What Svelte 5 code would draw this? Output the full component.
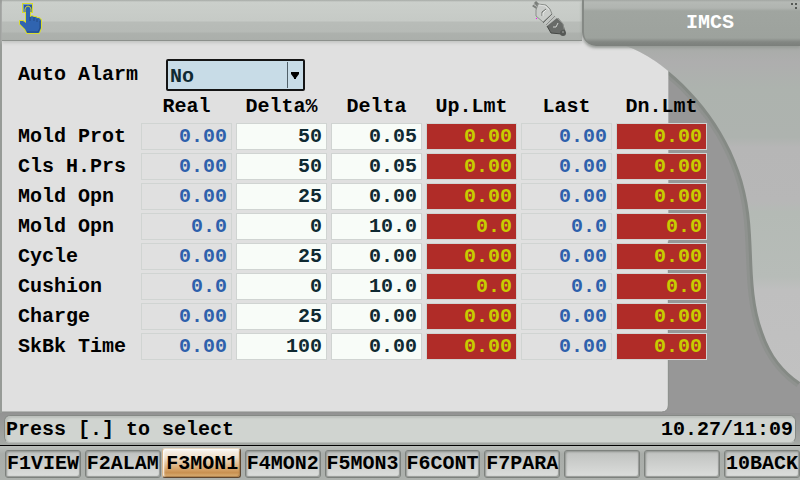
<script lang="ts">
  interface Row {
    name: string;
    values: string[];
  }

  const columns = [
    { title: 'Real', kind: 'actual' },
    { title: 'Delta%', kind: 'entry' },
    { title: 'Delta', kind: 'entry' },
    { title: 'Up.Lmt', kind: 'limit' },
    { title: 'Last', kind: 'actual' },
    { title: 'Dn.Lmt', kind: 'limit' },
  ];

  let rows: Row[] = $state([
    { name: 'Mold Prot', values: ['0.00', '50', '0.05', '0.00', '0.00', '0.00'] },
    { name: 'Cls H.Prs', values: ['0.00', '50', '0.05', '0.00', '0.00', '0.00'] },
    { name: 'Mold Opn', values: ['0.00', '25', '0.00', '0.00', '0.00', '0.00'] },
    { name: 'Mold Opn', values: ['0.0', '0', '10.0', '0.0', '0.0', '0.0'] },
    { name: 'Cycle', values: ['0.00', '25', '0.00', '0.00', '0.00', '0.00'] },
    { name: 'Cushion', values: ['0.0', '0', '10.0', '0.0', '0.0', '0.0'] },
    { name: 'Charge', values: ['0.00', '25', '0.00', '0.00', '0.00', '0.00'] },
    { name: 'SkBk Time', values: ['0.00', '100', '0.00', '0.00', '0.00', '0.00'] },
  ]);

  const keys = ['F1VIEW', 'F2ALAM', 'F3MON1', 'F4MON2', 'F5MON3', 'F6CONT', 'F7PARA', '', '', '10BACK'];

  let active = $state('F3MON1');
  let autoAlarm = $state('No');
</script>

<div class="screen">
  <header>
    <div class="status">
      <svg class="hand" viewBox="0 0 26 34" width="26" height="34" aria-hidden="true">
        <g class="glow">
          <path d="M5 2h9v8H5z" />
          <path d="M8 7l1-2h2l1 2v8l2-1 2 1h2l1 1h2l2 2v8l-2 5H9l-2-4-5-5v-3h3l3 2z" />
        </g>
        <path class="pad" d="M5 2h9v8H5z" />
        <path class="pad-light" d="M5 2h9v1H6v7H5z" />
        <path class="finger-edge" d="M7 10V7l1-2 2-1 2 1 1 2v3" />
        <path class="finger" d="M8 7l1-2h2l1 2v8l2-1 2 1h2l1 1h2l2 2v8l-2 5H9l-2-4-5-5v-3h3l3 2z" />
        <path class="shade" d="M12 15v4M16 15v4M19 17v3M22 19v7l-2 4H9" />
      </svg>
      <svg class="plug" viewBox="0 0 36 36" width="36" height="36" aria-hidden="true">
        <path d="M1 4l6 4M3 1l5 5" stroke="#7b7f7b" stroke-width="3" />
        <path d="M1 3l6 4" stroke="#c4c7c4" />
        <path d="M6 3l8 1 4 4 2 5-9 8-7-6V9z" fill="#c9ccc9" stroke="#8b8f8b" />
        <path d="M7 4l6 1 4 4" fill="none" stroke="#dfe1df" />
        <path d="M10 15v-4l4-3" fill="none" stroke="#6c706c" />
        <path d="M11 15v-3l3-3" fill="none" stroke="#e8eae8" />
        <path d="M21 13l4 4-9 9-4-4z" fill="#c0c3c0" />
        <path d="M20 13l-9 9" stroke="#6c6f6c" />
        <path d="M23 15l-9 9" stroke="#8a8d8a" />
        <path d="M25 17l6 6 2 6-3 4-11-1-4-7z" fill="#686b68" />
        <path d="M15 25l4 7 11 1 3-4" fill="none" stroke="#454845" />
        <path d="M26 17l5 6 1 5" fill="none" stroke="#888b88" />
        <path d="M21 26h3l2-4" fill="none" stroke="#d0d3d0" />
        <circle cx="31" cy="32" r="3" fill="#555855" />
        <circle cx="31" cy="31" r="1" fill="#8b8e8b" />
        <path d="M4 17h1v1H4z" fill="#f0f" />
      </svg>
    </div>
    <div class="title">
      <h1>IMCS</h1>
      <svg viewBox="0 0 8 8" width="8" height="8" aria-hidden="true">
        <path d="M0 0h2v2H0zM4 0h2v2H4zM4 4h2v2H4z" fill="#555955" />
      </svg>
    </div>
  </header>

  <main>
    <svg class="backdrop" viewBox="0 0 800 372" preserveAspectRatio="none" aria-hidden="true">
      <defs>
        <linearGradient id="side" x1="0" y1="0" x2="0" y2="1">
          <stop offset="0" stop-color="#a7aba7" />
          <stop offset="0.06" stop-color="#aeaeae" />
          <stop offset="0.14" stop-color="#adb3ae" />
          <stop offset="0.28" stop-color="#aeb3af" />
          <stop offset="0.31" stop-color="#b6b6b6" />
          <stop offset="0.47" stop-color="#b7b7b7" />
          <stop offset="0.5" stop-color="#b4bab5" />
          <stop offset="0.69" stop-color="#b7bcb8" />
          <stop offset="0.73" stop-color="#bfbfbf" />
          <stop offset="1" stop-color="#c1c1c1" />
        </linearGradient>
      </defs>
      <rect width="800" height="372" fill="#979797" />
      <path class="edge wide" d="M668 29C708 62 742 112 749 172C754 212 749 253 763 291C771 315 784 330 800 341" />
      <path class="edge" d="M668 29C708 62 742 112 749 172C754 212 749 253 763 291C771 315 784 330 800 341" />
      <path d="M612 0Q640 6 668 29C708 62 742 112 749 172C754 212 749 253 763 291C771 315 784 330 800 341V0z" fill="url(#side)" />
      <path d="M0 0H612Q640 6 668 29V364Q668 371 661 371H0z" fill="#e0e0e0" />
      <path d="M668 200V364Q668 371 661 371H0" fill="none" stroke="#8a8d8a" />
    </svg>

    <form>
      <div class="option">
        <label for="auto-alarm">Auto Alarm</label>
        <div class="picker">
          <select id="auto-alarm" bind:value={autoAlarm}>
            <option>No</option>
            <option>Yes</option>
          </select>
          <svg viewBox="0 0 16 26" width="16" height="26" aria-hidden="true">
            <path d="M0 0h1v26H0z" fill="#506068" />
            <path d="M4 10h8v2l-3 4v1H7v-1l-3-4z" />
          </svg>
        </div>
      </div>

      <table>
        <thead>
          <tr>
            <td></td>
            {#each columns as column}
              <th scope="col">{column.title}</th>
            {/each}
          </tr>
        </thead>
        <tbody>
          {#each rows as row}
            <tr>
              <th scope="row">{row.name}</th>
              {#each columns as column, i}
                <td>
                  {#if column.kind === 'entry'}
                    <input class="field entry" aria-label="{row.name} {column.title}" bind:value={row.values[i]} />
                  {:else}
                    <div class="field {column.kind}">{row.values[i]}</div>
                  {/if}
                </td>
              {/each}
            </tr>
          {/each}
        </tbody>
      </table>
    </form>
  </main>

  <div class="message">
    <p>
      <span>Press [.] to select</span>
      <time>10.27/11:09</time>
    </p>
  </div>

  <nav>
    {#each keys as key}
      <button type="button" class:active={key !== '' && key === active} onclick={() => (active = key)}>{key}</button>
    {/each}
  </nav>
</div>

<style>
  :global(body) {
    margin: 0;
  }

  .screen {
    display: flex;
    flex-direction: column;
    min-height: 100vh;
    background: #979797;
    color: #000;
    font: bold 20px/24px 'Liberation Mono', monospace;
  }

  header {
    position: relative;
    z-index: 1;
    display: flex;
    align-items: flex-start;
    height: 42px;
    background: linear-gradient(90deg, #989b98 2px, #e0e0e0 2px);
  }

  .status {
    display: flex;
    flex: 1;
    justify-content: space-between;
    height: 41px;
    box-sizing: border-box;
    margin-left: 2px;
    padding: 2px 14px 0 16px;
    border-bottom: 1px solid #8d918d;
    background: linear-gradient(#a5a9a5 0, #cbcfcb 2px, #c6cac6 21px, #b8bcb8 22px, #b6bab6 32px, #adb1ad 33px, #abafab);
    box-shadow: 0 2px 3px #c4c6c4;
  }

  .plug {
    margin-top: -1px;
  }

  .glow {
    fill: #d8dc30;
    stroke: #d8dc30;
    stroke-width: 2;
  }

  .pad {
    fill: #2f58a0;
  }

  .pad-light {
    fill: #6c94cc;
  }

  .finger-edge {
    fill: none;
    stroke: #d8dc30;
  }

  .finger {
    fill: #3064b0;
  }

  .shade {
    fill: none;
    stroke: #244a84;
  }

  .title {
    position: relative;
    width: 27.25%;
    height: 46px;
    box-sizing: border-box;
    padding: 11px 0 0 36px;
    border-left: 2px solid #858985;
    border-bottom-left-radius: 14px;
    background: linear-gradient(#a2a6a2 0, #b5b9b5 2px, #b0b4b0 8px, #a0a5a0 11px, #9da29d 38px, #828682 42px, #7b7f7b);
    box-shadow: 0 2px 3px #979b97;
    text-align: center;
  }

  .title svg {
    position: absolute;
    top: 3px;
    right: 1px;
  }

  h1 {
    margin: 0;
    color: #fff;
    font: inherit;
  }

  main {
    position: relative;
    flex: 1;
    border-left: 2px solid #979b97;
  }

  .backdrop {
    position: absolute;
    inset: 0;
    width: 100%;
    height: 100%;
  }

  .edge {
    fill: none;
    stroke: #858a85;
    stroke-width: 6;
  }

  .wide {
    stroke: #8f928f;
    stroke-width: 12;
  }

  form {
    position: relative;
    padding: 17px 0 0 16px;
  }

  .option {
    display: flex;
    align-items: center;
    gap: 28px;
  }

  .picker {
    position: relative;
    width: 139px;
  }

  select {
    display: block;
    width: 100%;
    height: 32px;
    padding: 3px 2px 0;
    border: 2px solid #151515;
    border-radius: 2px;
    background: #c8dce7;
    color: #102a32;
    font: inherit;
    appearance: none;
  }

  .picker svg {
    position: absolute;
    top: 3px;
    right: 2px;
    pointer-events: none;
  }

  table {
    border-collapse: collapse;
  }

  td,
  th {
    padding: 0;
    font: inherit;
  }

  thead th {
    height: 28px;
    padding: 2px 4px 0 0;
  }

  tbody td {
    height: 30px;
    padding-right: 4px;
  }

  tbody th {
    width: 123px;
    padding-top: 2px;
    text-align: left;
  }

  .field {
    display: block;
    width: 91px;
    height: 27px;
    box-sizing: border-box;
    padding: 1px 4px 0 0;
    border: 1px solid #d0d4d2;
    border-radius: 0;
    font: inherit;
    text-align: right;
  }

  .actual {
    color: #2e60ac;
  }

  .entry {
    background: #f8fcf8;
    color: #102a32;
  }

  .limit {
    background: #b02c28;
    color: #c8cc00;
  }

  .message {
    padding: 2px 4px;
    border-bottom: 1px solid #000;
    background: linear-gradient(#939393, #a5a9a5);
  }

  p {
    display: flex;
    justify-content: space-between;
    margin: 0;
    padding: 2px 2px 0 1px;
    border: 1px solid #858985;
    border-bottom-color: #b8bcb8;
    border-radius: 6px;
    background: #d0d4d0;
    box-shadow: inset 2px 2px 2px #bcc0bc;
  }

  nav {
    display: grid;
    grid-template-columns: repeat(10, 1fr);
    gap: 4px;
    padding: 4px 0 2px 5px;
    background: linear-gradient(#bcc0bc, #a9ada9 8px, #adb1ad);
  }

  button {
    height: 28px;
    padding: 0;
    border: 1px solid #7d817d;
    border-radius: 3px;
    background: linear-gradient(#bfc1bf, #dcdedc);
    box-shadow: inset 1px 1px 2px #8d918d, inset -1px -1px 1px #979b97;
    color: #000;
    font: inherit;
    white-space: nowrap;
  }

  .active {
    height: 30px;
    margin: -2px 0 0 -3px;
    padding: 2px 0 0 2px;
    border-color: #e8d8c0 #5d4630 #5d4630 #d8b890;
    background: linear-gradient(#f8f4ee, #f0e0cc 30%, #dcae78 65%, #c89050 85%, #e0b880);
    box-shadow: inset 1px 1px 2px #fff, inset -1px -1px 1px #a87840;
  }
</style>
